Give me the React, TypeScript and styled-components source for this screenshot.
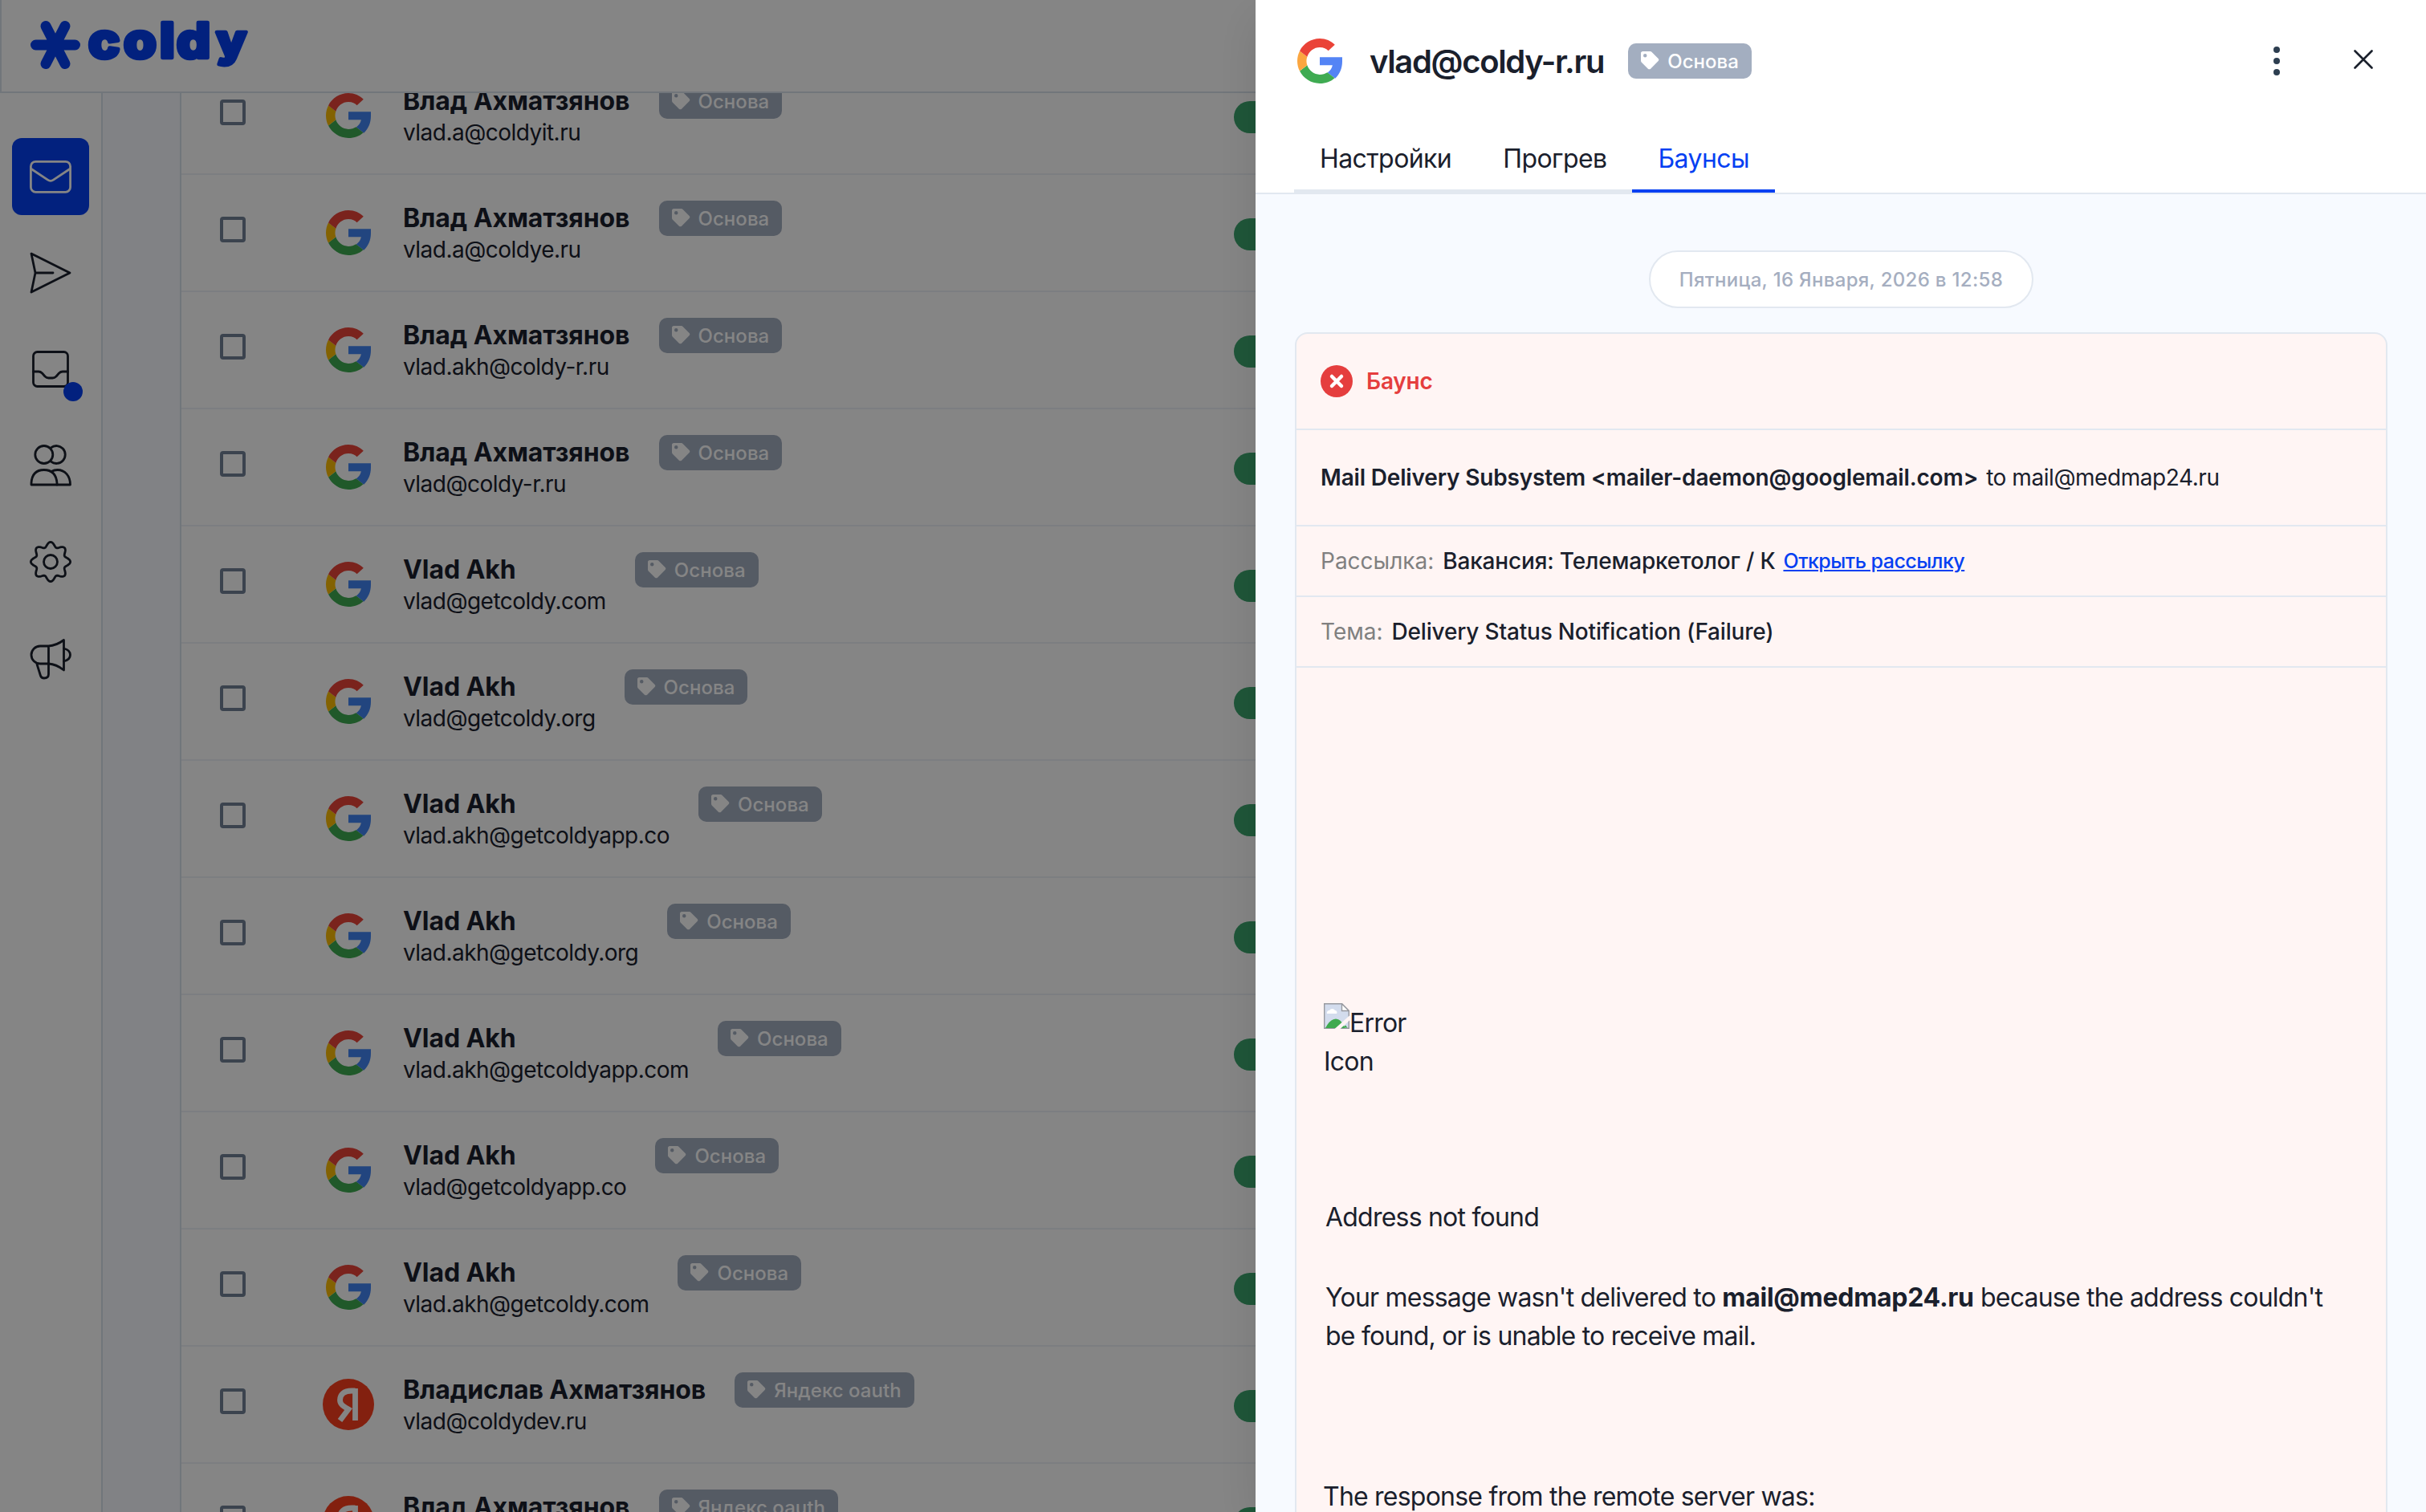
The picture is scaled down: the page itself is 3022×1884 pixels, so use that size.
import React from 'react'
import styled, { createGlobalStyle } from 'styled-components'

const GlobalStyle = createGlobalStyle`
    * {
        box-sizing: border-box;
    }

    body {
        margin: 0;
        overflow: hidden;
        background: #fff;
        color: #1a202c;
        font-family: Inter, "Liberation Sans", sans-serif;
    }
`

const Page = styled.div`
    position: relative;
    width: 3022px;
    height: 1884px;
    overflow: hidden;
    display: flex;
    flex-direction: column;
`

const Header = styled.header`
    flex: none;
    height: 116px;
    border-left: 2px solid #d9e2ec;
    border-bottom: 2px solid #d9e2ec;
    padding: 24px 0 0 34px;
`

const LogoSvg = styled.svg`
    overflow: visible;
`

const Body = styled.div`
    flex: 1;
    min-height: 0;
    display: flex;
`

const Sidebar = styled.nav`
    width: 128px;
    flex: none;
    border-right: 2px solid #d9e2ec;
    padding: 56px 0 0 15px;
    display: flex;
    flex-direction: column;
    gap: 24px;
`

const NavItem = styled.div<{ $active?: boolean }>`
    position: relative;
    width: 96px;
    height: 96px;
    border-radius: 12px;
    display: flex;
    align-items: center;
    justify-content: center;
    color: ${(props) => (props.$active ? '#fff' : '#1a202c')};
    background: ${(props) => (props.$active ? '#0540f2' : 'transparent')};
`

const NavDot = styled.span`
    position: absolute;
    left: 64px;
    top: 64px;
    width: 24px;
    height: 24px;
    border-radius: 50%;
    background: #0540f2;
`

const Content = styled.main`
    flex: 1;
    background: #f7faff;
    padding-left: 96px;
`

const Table = styled.div`
    height: 100%;
    overflow: hidden;
    background: #fff;
    border-left: 2px solid #d9e2ec;
    display: flex;
    flex-direction: column;
`

const Row = styled.div`
    flex: none;
    height: 146px;
    border-bottom: 2px solid #edf2f7;
    display: flex;
    align-items: flex-start;
    padding-left: 48px;

    /* the list is scrolled under the header */
    &:first-child {
        margin-top: -44px;
    }
`

const Checkbox = styled.span`
    width: 32px;
    height: 32px;
    margin-top: 52px;
    border: 4px solid #718096;
    border-radius: 4px;
`

const Provider = styled.div`
    width: 64px;
    height: 144px;
    margin-left: 96px;
    display: flex;
    align-items: center;
    justify-content: center;
`

const Person = styled.div`
    margin: 34px 36px 0 36px;
    white-space: nowrap;
`

const Name = styled.div`
    font-size: 32px;
    line-height: 40px;
    font-weight: 700;
    letter-spacing: -0.08px;
`

const Email = styled.div`
    margin-top: 1px;
    font-size: 28px;
    line-height: 36px;
    letter-spacing: -0.52px;
`

const Badge = styled.span`
    height: 44px;
    padding: 0 16px;
    border-radius: 10px;
    background: #a3aec0;
    color: #fff;
    display: inline-flex;
    align-items: center;
    gap: 9px;
    font-size: 24px;
    font-weight: 500;
    letter-spacing: 0.05px;
    white-space: nowrap;
`

const RowBadge = styled(Badge)`
    margin-top: 32px;
`

const Switch = styled.span`
    flex: none;
    width: 72px;
    height: 40px;
    border-radius: 20px;
    margin: 54px 1413px 0 auto;
    background: #3ca56d;
`

const Overlay = styled.div`
    position: absolute;
    inset: 0;
    background: rgba(0, 0, 0, 0.48);
`

const Drawer = styled.aside`
    position: absolute;
    top: 0;
    right: 0;
    width: 1458px;
    height: 100%;
    background: #f7faff;
    box-shadow: 0 20px 50px -10px rgba(0, 0, 0, 0.15);
    display: flex;
    flex-direction: column;
`

const DrawerHeader = styled.div`
    flex: none;
    height: 242px;
    background: #fff;
    border-bottom: 2px solid #e2e8f0;
    display: flex;
    flex-direction: column;
    justify-content: space-between;
`

const TitleBar = styled.div`
    height: 152px;
    padding: 0 66px 0 52px;
    display: flex;
    align-items: center;
`

const Title = styled.h1`
    margin: 0 30px 0 34px;
    padding-top: 1px;
    font-size: 40px;
    line-height: 48px;
    font-weight: 600;
    letter-spacing: -1.35px;
`

const Actions = styled.div`
    margin-left: auto;
    display: flex;
    align-items: center;
    gap: 92px;
`

const Tabs = styled.div`
    display: flex;
    padding-left: 48px;
`

const Tab = styled.div<{ $active?: boolean }>`
    height: 84px;
    padding: 18px 32px 0;
    font-size: 32px;
    line-height: 48px;
    letter-spacing: -0.58px;
    border-bottom: 4px solid ${(props) => (props.$active ? '#0540f2' : '#e2e8f0')};
    color: ${(props) => (props.$active ? '#0540f2' : '#1a202c')};
`

const DrawerBody = styled.div`
    flex: 1;
    min-height: 0;
    overflow: hidden;
    padding: 70px 48px 0 49px;
    display: flex;
    flex-direction: column;
`

const DatePill = styled.div`
    flex: none;
    align-self: center;
    height: 72px;
    padding: 0 36px;
    border: 2px solid #e2e8f0;
    border-radius: 36px;
    background: #fff;
    color: #a5aec0;
    font-size: 24px;
    line-height: 70px;
    font-weight: 500;
    letter-spacing: 0.32px;
    margin-bottom: 30px;
`

const Card = styled.section`
    flex: none;
    height: 1700px;
    border: 2px solid #e2e8f0;
    border-radius: 16px;
    background: #fff5f4;
`

const CardRow = styled.div<{ $tall?: boolean }>`
    height: ${(props) => (props.$tall ? 120 : 88)}px;
    padding-left: 30px;
    border-bottom: 2px solid #e2e8f0;
    display: flex;
    align-items: center;
    font-size: 28px;
    white-space: pre;
`

const BounceLabel = styled.span`
    margin-left: 17px;
    color: #e53e3e;
    font-weight: 600;
    letter-spacing: -0.2px;
`

const From = styled.span`
    font-weight: 600;
    letter-spacing: -0.17px;
`

const To = styled.span`
    margin-left: 10px;
    letter-spacing: -0.44px;
`

const Muted = styled.span`
    color: #808080;
`

const Value = styled.span`
    margin-left: 11px;
    font-weight: 500;
    letter-spacing: -0.18px;
`

const CampaignLink = styled.a`
    margin-left: 10px;
    color: #0540f2;
    font-size: 25px;
    font-weight: 500;
    letter-spacing: -0.5px;
    text-decoration: underline;
`

const Letter = styled.div`
    padding: 418px 34px 0;
    font-size: 32px;
    line-height: 48px;
    letter-spacing: -0.78px;

    b {
        letter-spacing: -0.28px;
    }
`

const BrokenImage = styled.div`
    width: 160px;
    height: 243px;
`

const BrokenGlyph = styled.svg`
    width: 32px;
    height: 32px;
    vertical-align: 4px;
`

const Paragraph = styled.p<{ $gap: number }>`
    margin: 0 3px ${(props) => props.$gap}px 2px;
`

const Response = styled.div`
    margin-left: -1px;
`

const Logo = () => (
    <LogoSvg width="280" height="70" viewBox="36 24 280 70">
        <path
            d="M44.500 56H93.500M57 32.500L81 79.500M81 32.500L57 79.500"
            stroke="#0540f2"
            strokeWidth="13"
            strokeLinecap="round"
        />
        <text
            transform="scale(1.1 1)"
            x="100 140 181 200"
            y="72"
            fontFamily="Inter, sans-serif"
            fontSize="60"
            fontWeight="800"
            fill="#0540f2"
            stroke="#0540f2"
            strokeWidth="4.600"
            strokeLinejoin="round"
        >
            cold
            <tspan x="245" fontSize="55" dy="-1.500">
                y
            </tspan>
        </text>
    </LogoSvg>
)

const GoogleIcon = ({ yellow = '#fbbc05', blue = '#4285f4' }: { yellow?: string; blue?: string }) => (
    <svg width="56" height="56" viewBox="0 0 48 48">
        <path fill={blue} d="M48 20H24v8.600h13.600c-.6 3.300-2.500 6-5.200 7.800v.1l8 6.200C45.200 38.300 48 32 48 24.500z" />
        <path fill="#3fab52" d="M24 48c6.500 0 11.900-2.100 15.900-5.800l-7.800-6c-2.100 1.400-4.900 2.300-8.100 2.300-6.200 0-11.500-4.200-13.400-9.900l-8 6.200C6.500 42.600 14.600 48 24 48z" />
        <path fill={yellow} d="M10.600 28.600c-.5-1.500-.8-3-.8-4.600s.3-3.200.8-4.600l-8-6.200C.9 16.400 0 20.100 0 24s.9 7.600 2.600 10.800z" />
        <path fill="#ea4338" d="M24 9.500c4.200 0 7.200 1.700 9.100 3.500l7-6.400C35.900 2.500 30.500 0 24 0 14.600 0 6.500 5.400 2.600 13.200l8 6.200C12.500 13.700 17.800 9.500 24 9.500z" />
    </svg>
)

const YandexIcon = () => (
    <svg width="64" height="64" viewBox="0 0 64 64">
        <circle cx="32" cy="32" r="32" fill="#fc3f1d" />
        <path
            d="M40.500 12V52M40.500 15H36C26 15 21.500 20 21.500 26.500C21.500 32 26 34.500 32 38L21.500 52"
            fill="none"
            stroke="#fff"
            strokeWidth="6.800"
        />
    </svg>
)

const TagIcon = () => (
    <svg width="24" height="24" viewBox="0 0 512 512" fill="currentColor">
        <path d="M0 252V48C0 21 21 0 48 0h204a48 48 0 0 1 34 14l176 176c19 19 19 49 0 68L258 462c-19 19-49 19-68 0L14 286A48 48 0 0 1 0 252zM112 64a48 48 0 1 0 0 96 48 48 0 0 0 0-96z" />
    </svg>
)

const NavSvg = ({ children }: { children: React.ReactNode }) => (
    <svg
        width="56"
        height="56"
        viewBox="0 0 56 56"
        fill="none"
        stroke="currentColor"
        strokeWidth="2.800"
        strokeLinecap="round"
        strokeLinejoin="round"
    >
        {children}
    </svg>
)

const MailIcon = () => (
    <NavSvg>
        <rect x="3.400" y="9.300" width="49.200" height="38" rx="6" />
        <path d="M4 18.500L24.500 32.200Q28 34.500 31.500 32.200L52 18.500" />
    </NavSvg>
)

const SendIcon = () => (
    <NavSvg>
        <path d="M4 4L52 28L4 52L9 28ZM9 28H31" />
    </NavSvg>
)

const InboxIcon = () => (
    <NavSvg>
        <rect x="6.500" y="6.500" width="43" height="43" rx="5" />
        <path d="M6.500 31H13Q15.500 31 17.500 33L21 37Q23 39 25.500 39H30.500Q33 39 35 37L38.500 33Q40.500 31 43 31H49.500" />
    </NavSvg>
)

const UsersIcon = () => (
    <NavSvg>
        <circle cx="19.800" cy="14.500" r="11" />
        <path d="M28.500 5.800A11 11 0 1 1 28.500 23.200" />
        <path d="M4 52V50Q5 33.500 19.800 33.500T36 50V52Z" />
        <path d="M29 35.500Q32.500 33.500 36.500 33.500C46 33.500 52.500 41 52.500 52H36" />
    </NavSvg>
)

// eight-tooth cog outline, sampled from a wave around the circle
const gearPath = () => {
    const points: string[] = []
    for (let i = 0; i <= 160; i++) {
        const a = (i / 160) * Math.PI * 2
        const r = 21.7 + 2.9 * Math.cos(8 * a)
        points.push(`${(28 + r * Math.cos(a)).toFixed(2)} ${(28 + r * Math.sin(a)).toFixed(2)}`)
    }
    return `M${points.join('L')}Z`
}

const GearIcon = () => (
    <NavSvg>
        <path d={gearPath()} />
        <circle cx="28" cy="28" r="8.500" />
    </NavSvg>
)

const MegaphoneIcon = () => (
    <NavSvg>
        <path d="M25.500 13V35H15A11 11 0 0 1 15 13H25.500Q35 12.500 44.500 5.500V43Q35 35.500 25.500 35" />
        <path d="M44.500 16Q52.500 18 52.500 24T44.500 32" />
        <path d="M11 35.500L15.500 50Q16.500 53 20 53Q25.500 53 25.500 48V35" />
    </NavSvg>
)

const ErrorIcon = () => (
    <svg width="40" height="40" viewBox="0 0 40 40">
        <circle cx="20" cy="20" r="20" fill="#e53e3e" />
        <path d="M14 14L26 26M26 14L14 26" stroke="#fff" strokeWidth="4.500" strokeLinecap="round" />
    </svg>
)

const KebabIcon = () => (
    <svg width="8" height="36" viewBox="0 0 8 36" fill="#2d3e50">
        <circle cx="4" cy="4" r="4" />
        <circle cx="4" cy="18" r="4" />
        <circle cx="4" cy="32" r="4" />
    </svg>
)

const CloseIcon = () => (
    <svg width="24" height="28" viewBox="0 0 24 28" stroke="#1a202c" strokeWidth="2.600" strokeLinecap="round">
        <path d="M1.500 1.500L22.500 22.500M22.500 1.500L1.500 22.500" />
    </svg>
)

const accounts = [
    { name: 'Влад Ахматзянов', email: 'vlad.a@coldyit.ru', tag: 'Основа' },
    { name: 'Влад Ахматзянов', email: 'vlad.a@coldye.ru', tag: 'Основа' },
    { name: 'Влад Ахматзянов', email: 'vlad.akh@coldy-r.ru', tag: 'Основа' },
    { name: 'Влад Ахматзянов', email: 'vlad@coldy-r.ru', tag: 'Основа' },
    { name: 'Vlad Akh', email: 'vlad@getcoldy.com', tag: 'Основа' },
    { name: 'Vlad Akh', email: 'vlad@getcoldy.org', tag: 'Основа' },
    { name: 'Vlad Akh', email: 'vlad.akh@getcoldyapp.co', tag: 'Основа' },
    { name: 'Vlad Akh', email: 'vlad.akh@getcoldy.org', tag: 'Основа' },
    { name: 'Vlad Akh', email: 'vlad.akh@getcoldyapp.com', tag: 'Основа' },
    { name: 'Vlad Akh', email: 'vlad@getcoldyapp.co', tag: 'Основа' },
    { name: 'Vlad Akh', email: 'vlad.akh@getcoldy.com', tag: 'Основа' },
    { name: 'Владислав Ахматзянов', email: 'vlad@coldydev.ru', tag: 'Яндекс oauth', yandex: true },
    { name: 'Влад Ахматзянов', email: 'vlad@coldyit.ru', tag: 'Яндекс oauth', yandex: true },
]

const App = () => {
    return (
        <Page>
            <GlobalStyle />
            <Header>
                <Logo />
            </Header>
            <Body>
                <Sidebar>
                    <NavItem $active>
                        <MailIcon />
                    </NavItem>
                    <NavItem>
                        <SendIcon />
                    </NavItem>
                    <NavItem>
                        <InboxIcon />
                        <NavDot />
                    </NavItem>
                    <NavItem>
                        <UsersIcon />
                    </NavItem>
                    <NavItem>
                        <GearIcon />
                    </NavItem>
                    <NavItem>
                        <MegaphoneIcon />
                    </NavItem>
                </Sidebar>
                <Content>
                    <Table>
                        {accounts.map((account) => (
                            <Row key={account.email + account.tag}>
                                <Checkbox />
                                <Provider>{account.yandex ? <YandexIcon /> : <GoogleIcon />}</Provider>
                                <Person>
                                    <Name>{account.name}</Name>
                                    <Email>{account.email}</Email>
                                </Person>
                                <RowBadge>
                                    <TagIcon />
                                    {account.tag}
                                </RowBadge>
                                <Switch />
                            </Row>
                        ))}
                    </Table>
                </Content>
            </Body>

            <Overlay />

            <Drawer>
                <DrawerHeader>
                    <TitleBar>
                        <GoogleIcon yellow="#fba640" blue="#5484f5" />
                        <Title>vlad@coldy-r.ru</Title>
                        <Badge>
                            <TagIcon />
                            Основа
                        </Badge>
                        <Actions>
                            <KebabIcon />
                            <CloseIcon />
                        </Actions>
                    </TitleBar>
                    <Tabs>
                        <Tab>Настройки</Tab>
                        <Tab>Прогрев</Tab>
                        <Tab $active>Баунсы</Tab>
                    </Tabs>
                </DrawerHeader>
                <DrawerBody>
                    <DatePill>Пятница, 16 Января, 2026 в 12:58</DatePill>
                    <Card>
                        <CardRow $tall>
                            <ErrorIcon />
                            <BounceLabel>Баунс</BounceLabel>
                        </CardRow>
                        <CardRow $tall>
                            <From>{'Mail Delivery Subsystem <mailer-daemon@googlemail.com>'}</From>
                            <To>to mail@medmap24.ru</To>
                        </CardRow>
                        <CardRow>
                            <Muted>Рассылка:</Muted>
                            <Value>Вакансия: Телемаркетолог / К</Value>
                            <CampaignLink>Открыть рассылку</CampaignLink>
                        </CardRow>
                        <CardRow>
                            <Muted>Тема:</Muted>
                            <Value>Delivery Status Notification (Failure)</Value>
                        </CardRow>
                        <Letter>
                            <BrokenImage>
                                <BrokenGlyph viewBox="0 0 32 32">
                                    <path d="M.7.700H22.500L31.300 9.500V31.300H.700Z" fill="#d3dced" stroke="#97999f" strokeWidth="1.400" />
                                    <path d="M22.500.700V9.500H31.300Z" fill="#fff" stroke="#97999f" strokeWidth="1.400" />
                                    <path d="M4 13a3 3 0 0 1 3-4 4 4 0 0 1 7 0 2.500 2.500 0 0 1 2 4z" fill="#fff" />
                                    <path d="M2 31Q8 19.500 15 19.500T26 31Z" fill="#3faa4f" />
                                    <path d="M13.500 32L32 15.500V21.500L20.500 32Z" fill="#fff5f4" />
                                    <path d="M23.500 30.600L27 27.500L29.500 30.600Z" fill="#3faa4f" />
                                </BrokenGlyph>
                                Error Icon
                            </BrokenImage>
                            <Paragraph $gap={52}>Address not found</Paragraph>
                            <Paragraph $gap={152}>
                                Your message wasn't delivered to <b>mail@medmap24.ru</b> because the address couldn't
                                <br />
                                be found, or is unable to receive mail.
                            </Paragraph>
                            <Response>The response from the remote server was:</Response>
                        </Letter>
                    </Card>
                </DrawerBody>
            </Drawer>
        </Page>
    )
}

export default App
